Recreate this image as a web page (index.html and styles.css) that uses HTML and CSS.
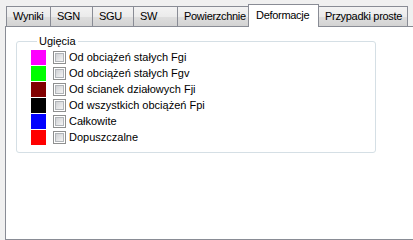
FILE: index.html
```html
<!DOCTYPE html>
<html lang="pl">
  <head>
    <meta charset="UTF-8" />
    <title>Deformacje</title>
    <link rel="stylesheet" href="styles.css">
  </head>
  <body>
    <div class="tabbar">
      <div class="tab" style="width:45px">Wyniki</div>
      <div class="tab" style="width:43px">SGN</div>
      <div class="tab" style="width:42px">SGU</div>
      <div class="tab" style="width:45px">SW</div>
      <div class="tab" style="width:73px">Powierzchnie</div>
      <div class="tab active" style="width:71px">Deformacje</div>
      <div class="tab" style="width:90px">Przypadki proste</div>
    </div>
    <div class="panel">
      <fieldset class="group">
        <legend>Ugięcia</legend>
        <div class="row"><span class="swatch" style="background:#ff00ff"></span><span class="check"><span></span></span><span class="label">Od obciążeń stałych Fgi</span></div>
        <div class="row"><span class="swatch" style="background:#00ff00"></span><span class="check"><span></span></span><span class="label">Od obciążeń stałych Fgv</span></div>
        <div class="row"><span class="swatch" style="background:#800000"></span><span class="check"><span></span></span><span class="label">Od ścianek działowych Fji</span></div>
        <div class="row"><span class="swatch" style="background:#000000"></span><span class="check"><span></span></span><span class="label">Od wszystkich obciążeń Fpi</span></div>
        <div class="row"><span class="swatch" style="background:#0000ff"></span><span class="check"><span></span></span><span class="label">Całkowite</span></div>
        <div class="row"><span class="swatch" style="background:#ff0000"></span><span class="check"><span></span></span><span class="label">Dopuszczalne</span></div>
      </fieldset>
    </div>
  </body>
</html>
```
FILE: styles.css
```css
body {
  margin: 0;
  background: #f0f0f0;
  font-family: "Liberation Sans", Arial, sans-serif;
  font-size: 11px;
  color: #000;
  overflow: hidden;
}

.tabbar {
  display: flex;
  align-items: flex-end;
  padding: 5px 0 0 6px;
  height: 21px;
}

.tab {
  box-sizing: border-box;
  flex: none;
  height: 20px;
  padding: 3px 0 0 6px;
  margin-right: -1px;
  border: 1px solid #898c95;
  border-bottom: none;
  background: linear-gradient(#f3f3f3, #ebebeb 50%, #dedede 51%, #d3d3d3);
  white-space: nowrap;
  letter-spacing: -0.3px;
  overflow: hidden;
}

.tab.active {
  position: relative;
  z-index: 1;
  height: 23px;
  margin: 0 -1px -1px -1px;
  padding: 4px 0 0 7px;
  background: #fff;
}

.panel {
  box-sizing: border-box;
  margin-left: 5px;
  height: 214px;
  border: 1px solid #898c95;
  border-right: none;
  background: #fff;
  padding: 8px 0 0 10px;
}

.group {
  box-sizing: border-box;
  width: 360px;
  margin: 0;
  padding: 2px 0 7px 14px;
  border: 1px solid #d5dfe5;
  border-radius: 3px;
}

.group legend {
  padding: 0 2px;
  margin-left: 6px;
}

.row {
  display: flex;
  align-items: center;
  height: 16px;
}

.swatch {
  width: 15px;
  height: 15px;
  margin-right: 7px;
}

.check {
  box-sizing: border-box;
  width: 13px;
  height: 13px;
  border: 1px solid #8e8f8f;
  padding: 1px;
  background: #fff;
  margin-right: 3px;
}

.check span {
  display: block;
  box-sizing: border-box;
  width: 9px;
  height: 9px;
  border: 1px solid #b0b4b8;
  background: linear-gradient(135deg, #cfd1d4, #f4f4f4);
}

.label {
  white-space: nowrap;
}
```
